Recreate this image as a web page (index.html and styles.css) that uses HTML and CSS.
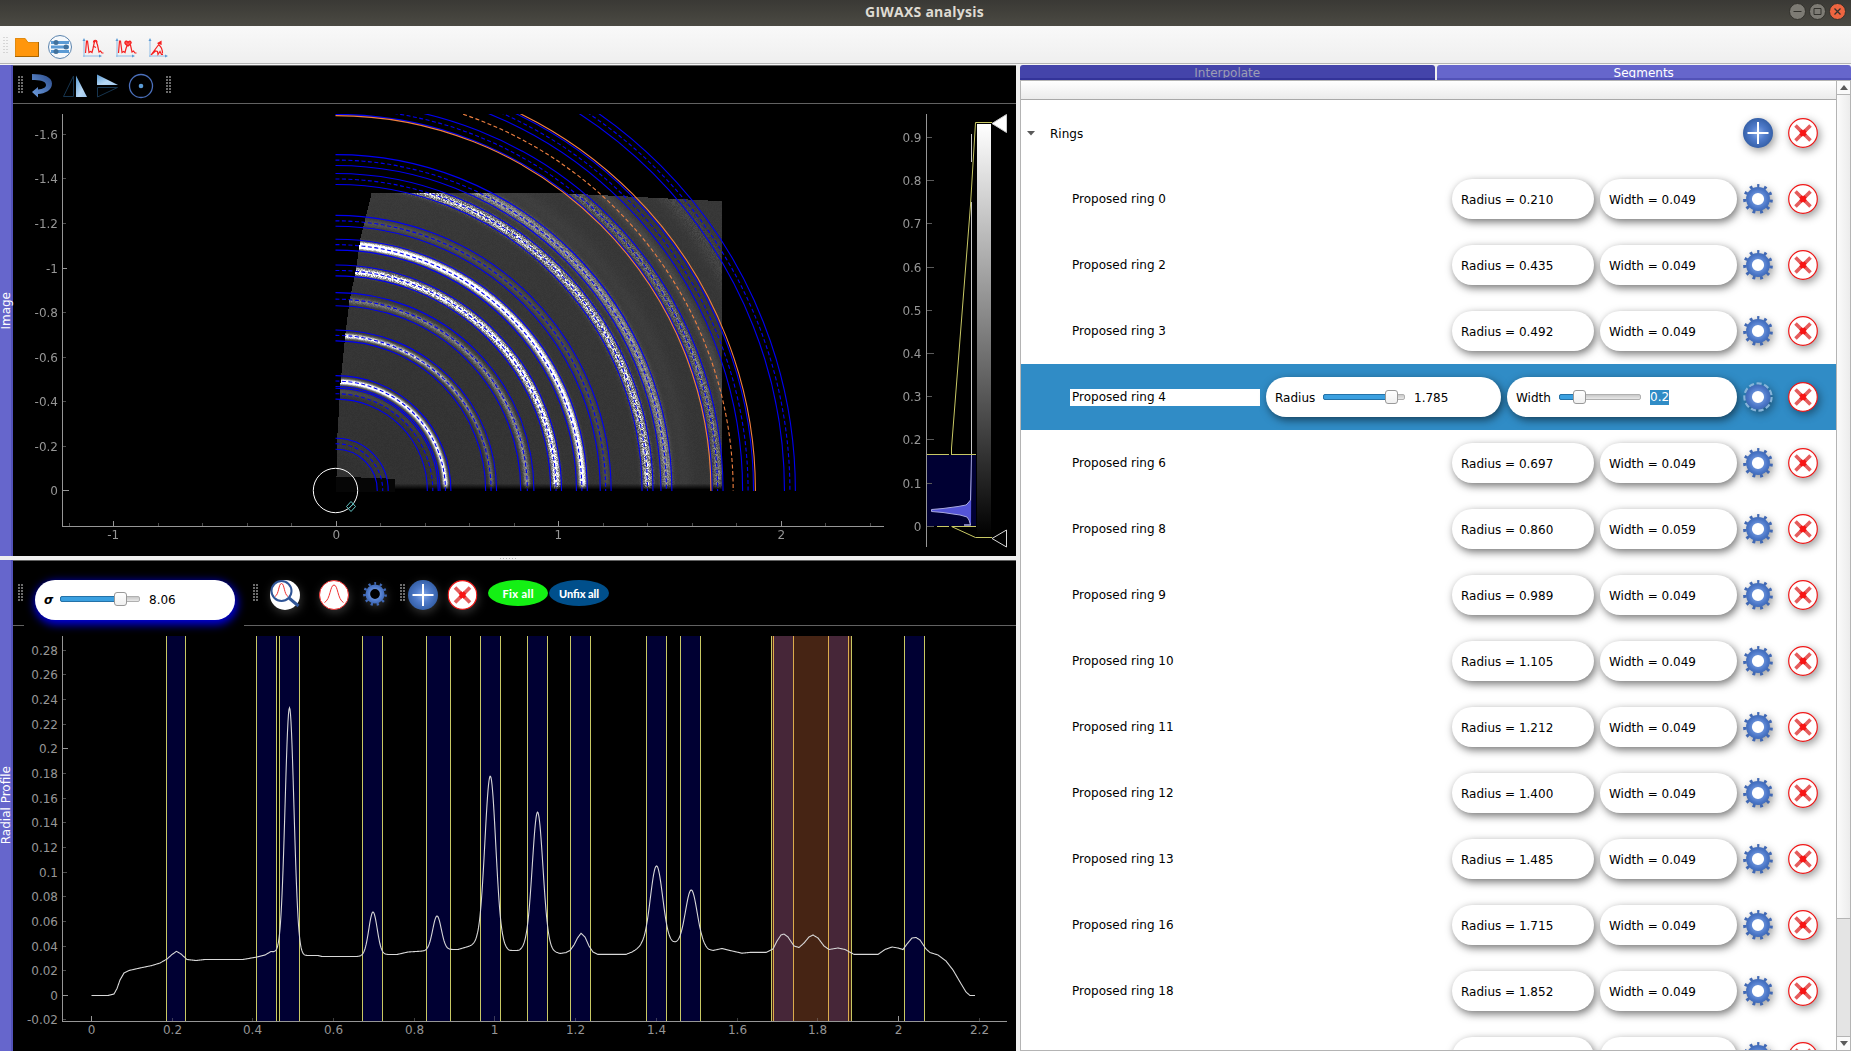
FILE: index.html
```html
<!DOCTYPE html>
<html lang="en">
<head>
<meta charset="utf-8">
<title>GIWAXS analysis</title>
<link rel="stylesheet" href="styles.css">
</head>
<body>
<svg class="defs" width="0" height="0" aria-hidden="true">
  <defs>
    <radialGradient id="blueBall"><stop offset="0" stop-color="#86aae8"/><stop offset=".5" stop-color="#4f7bca"/><stop offset="1" stop-color="#3560a8"/></radialGradient>
    <radialGradient id="gearFill" gradientUnits="userSpaceOnUse" cx="15" cy="15" r="15"><stop offset=".3" stop-color="#6f97de"/><stop offset=".65" stop-color="#4a75c6"/><stop offset="1" stop-color="#3560a8"/></radialGradient>
    <linearGradient id="arrowFill" x1="1" y1="0" x2="0" y2="1"><stop offset="0" stop-color="#2a4a8a"/><stop offset="1" stop-color="#6f9fe0"/></linearGradient>
    <linearGradient id="mirrorFill" x1="0" y1="0" x2="1" y2="1"><stop offset="0" stop-color="#5a9bd4"/><stop offset=".6" stop-color="#b8d8f4"/><stop offset="1" stop-color="#9cc4ea"/></linearGradient>
    <linearGradient id="barFill" x1="0" y1="0" x2="0" y2="1"><stop offset="0" stop-color="#fff"/><stop offset="1" stop-color="#000"/></linearGradient>
  </defs>
  <symbol id="add" viewBox="0 0 30 30"><circle cx="15" cy="15" r="15" fill="url(#blueBall)"/><path d="M15 4v22M4.500 15h21" stroke="#fff" stroke-width="2"/></symbol>
  <symbol id="del" viewBox="0 0 30 30"><circle cx="15" cy="15" r="14.300" fill="#fff" stroke="#f01818" stroke-width="1.200"/><path d="M7.500 7.500l15 15M22.500 7.500l-15 15" stroke="#e45c5c" stroke-width="3.600"/><path d="M12.500 12.500l5 5M17.500 12.500l-5 5" stroke="#f81414" stroke-width="3.600"/></symbol>
  <symbol id="gear" viewBox="0 0 30 30"><circle class="gear-hole" cx="15" cy="15" r="8"/><circle cx="15" cy="15" r="9" fill="none" stroke="url(#gearFill)" stroke-width="5.800"/><circle cx="15" cy="15" r="13.200" fill="none" stroke="#4068b4" stroke-width="3.400" stroke-dasharray="2.800 4.740" stroke-dashoffset="1.400" transform="rotate(-90 15 15)"/></symbol>
</svg>

<header class="titlebar">
  <span class="title">GIWAXS analysis</span>
  <div class="window-buttons">
    <svg width="17" height="17" viewBox="0 0 17 17"><circle cx="8.500" cy="8.500" r="8" fill="#7d7b74" stroke="#33322d"/><path d="M4.500 8.500h8" stroke="#33322d"/></svg>
    <svg width="17" height="17" viewBox="0 0 17 17"><circle cx="8.500" cy="8.500" r="8" fill="#7d7b74" stroke="#33322d"/><path d="M5 5.500h7v6H5z" fill="none" stroke="#33322d"/></svg>
    <svg width="17" height="17" viewBox="0 0 17 17"><circle cx="8.500" cy="8.500" r="8" fill="#ee6540" stroke="#33322d"/><path d="M5.500 5.500l6 6M11.500 5.500l-6 6" stroke="#33322d" stroke-width="1.300"/></svg>
  </div>
</header>

<nav class="main-toolbar">
  <svg width="180" height="37" viewBox="0 26 180 37">
    <path d="M4 37v17M7 37v17" stroke="#b8b8b8" stroke-dasharray="1 2"/>
    <path d="M15 38h10l3 4h11v15H15z" fill="#ff960c"/><path d="M15.500 57v-18.500h9.500l3 4h10" fill="none" stroke="#e08a10"/><path d="M38.500 42v14.500H15" fill="none" stroke="#a86400"/>
    <circle cx="60" cy="47" r="11.500" fill="#f6f9fc" stroke="#5b84ae"/>
    <path d="M51 42.500h18M51 47h18M51 51.500h18" stroke="#5b9bd5" stroke-width="3"/>
    <circle cx="56" cy="42.500" r="2.500" fill="#41719c"/><circle cx="66" cy="47" r="2.500" fill="#41719c"/><circle cx="56" cy="51.500" r="2.500" fill="#41719c"/>
    <g fill="none" stroke="#8fbce6">
      <path d="M84 57V40M83 56h17M117 57V40M116 56h17M150 57V40M149 56h17"/>
      <path d="M82.500 41l1.500-3 1.500 3zM115.500 41l1.500-3 1.500 3zM148.500 41l1.500-3 1.500 3zM99 54.500l3 1.500-3 1.500zM132 54.500l3 1.500-3 1.500zM165 54.500l3 1.500-3 1.500z" fill="#5b9bd5" stroke="none"/>
    </g>
    <g fill="none" stroke="#f52020" stroke-width="1.200">
      <path d="M85.500 53l1-12h1l1.500 11.500 1.500-1 1.500 1 1-4 1.500-7 1.500-.5 1.500 4 1.500 7 1.500-1 1.500 2h1.500"/><path d="M93.500 42.500c0-3 3.500-3 3.500 0M94 46.500l2 1"/>
      <path d="M118.500 53l1-12h1l1.500 11.500 1.500-1 1.500 1 1-4 1.500-4 1.500-.5 1.500 1 1.500 7 1.500-1 1.500 2h1.500"/><path d="M125 42c1-2 2.500-.5 3 .5.500-1 2-2 3-.5s-2 3-3 4c-1-1-4-2-3-4z" fill="#f55"/>
      <path d="M151 55l10-13.500M157.500 43.500l3.500-2v3.500M159 45c2.500 2 3.500 5 3.500 8.500M151.500 54.500l4-3.500 2 .5.500 3 2-3 1.500 3h1.500"/>
    </g>
  </svg>
</nav>

<main class="workspace">
  <section class="left">
    <div class="dock">
      <div class="side-tab"><span>Image</span></div>
      <div class="panel">
        <div class="tools tools-image">
          <svg width="170" height="37" viewBox="13 66 170 37">
            <path d="M19 76v17M22 76v17M167 76v17M170 76v17" stroke="#6c6c6c" stroke-width="2" stroke-dasharray="2 1"/>
            <path d="M32 74c12 0 20 3 20 9.500 0 7-7 10-14 10.500v3.500L32 92l6-5v2.500c5-.5 8-2 8-4.500 0-4-6-5-14-5z" fill="url(#arrowFill)"/>
            <path d="M73.500 76v20.500h-10z" fill="none" stroke="#16344e"/><path d="M76 75.500V97h11z" fill="url(#mirrorFill)"/>
            <path d="M97 74.500V85h21z" fill="url(#mirrorFill)"/><path d="M97.500 87.500h20l-20 9.500z" fill="none" stroke="#16344e"/>
            <circle cx="141" cy="86" r="11.500" fill="none" stroke="#4b70bc" stroke-width="1.300"/><circle cx="141" cy="86" r="2.300" fill="#5b9bd5"/>
          </svg>
        </div>
        <div class="plot">
          <canvas id="detector" class="detector" width="386" height="299"></canvas>
          <svg id="imagePlot" class="layer" width="1003" height="452" viewBox="13 104 1003 452"></svg>
        </div>
      </div>
    </div>
    <div class="split-h"></div>
    <div class="dock">
      <div class="side-tab"><span>Radial Profile</span></div>
      <div class="panel">
        <div class="tools tools-profile">
          <svg class="grip" width="6" height="17"><path d="M1 0v17M4 0v17" stroke="#6c6c6c" stroke-width="2" stroke-dasharray="2 1"/></svg>
          <div class="sigma-cell">
            <div class="pill sigma"><i>σ</i><div class="slider wide"><b style="width:59px"></b><s style="left:53px"></s></div><span>8.06</span></div>
          </div>
          <svg width="400" height="64" viewBox="244 561 400 64">
            <path d="M254 584v17M257 584v17M401 584v17M404 584v17" stroke="#6c6c6c" stroke-width="2" stroke-dasharray="2 1"/>
            <g class="glow">
            <circle cx="285" cy="595" r="15" fill="#fff"/><circle cx="281.500" cy="591" r="10" fill="#fff" stroke="#2f5597" stroke-width="2"/><path d="M289 598l9.500 8" stroke="#2f5597" stroke-width="3"/><path d="M275 596.500c4-2 3.500-13 6.500-13s2.500 11 6.500 13" fill="none" stroke="#f03030"/>
            <circle cx="334" cy="595" r="14.500" fill="#fff" stroke="#f03030"/><path d="M324.500 602.500c6-3 5.500-17.500 9.500-17.500s3.500 14.500 9.500 17.500" fill="none" stroke="#f03030"/>
            <use href="#gear" x="363" y="582" width="24" height="24"/>
            <use href="#add" x="408" y="580" width="30" height="30"/>
            <use href="#del" x="447.500" y="580" width="30" height="30"/>
            </g>
            <ellipse cx="518" cy="593" rx="30" ry="13" fill="#14f014"/><ellipse cx="579" cy="593" rx="30" ry="13" fill="#004f8b"/>
            <text class="fix" x="518" y="597.500" textLength="31">Fix all</text><text class="fix" x="579" y="597.500" textLength="40">Unfix all</text>
          </svg>
        </div>
        <div class="plot">
          <svg id="profilePlot" class="layer" width="1003" height="425" viewBox="13 626 1003 425"></svg>
        </div>
      </div>
    </div>
  </section>

  <div class="split-v"></div>

  <section class="right">
    <div class="tabs"><div class="tab off">Interpolate</div><div class="tab">Segments</div></div>
    <div class="tree">
      <div class="tree-body">
        <div class="tree-head"></div>
        <div class="row group"><svg class="caret" width="8" height="5"><path d="M0 0h8l-4 4.500z" fill="#5a5a5a"/></svg><span class="name">Rings</span><svg class="ic"><use href="#add"/></svg><svg class="ic"><use href="#del"/></svg></div>
        <div class="row"><span class="name">Proposed ring 0</span><div class="pill r">Radius = 0.210</div><div class="pill w">Width = 0.049</div><svg class="ic"><use href="#gear"/></svg><svg class="ic"><use href="#del"/></svg></div>
        <div class="row"><span class="name">Proposed ring 2</span><div class="pill r">Radius = 0.435</div><div class="pill w">Width = 0.049</div><svg class="ic"><use href="#gear"/></svg><svg class="ic"><use href="#del"/></svg></div>
        <div class="row"><span class="name">Proposed ring 3</span><div class="pill r">Radius = 0.492</div><div class="pill w">Width = 0.049</div><svg class="ic"><use href="#gear"/></svg><svg class="ic"><use href="#del"/></svg></div>
        <div class="row selected"><span class="name edit">Proposed ring 4</span>
          <div class="pill re"><label>Radius</label><div class="slider"><b style="width:67px"></b><s style="left:61px"></s></div><span>1.785</span></div>
          <div class="pill we"><label>Width</label><div class="slider"><b style="width:19px"></b><s style="left:13px"></s></div><span class="mark">0.2</span></div>
          <svg class="ic" viewBox="0 0 30 30"><circle cx="15" cy="15" r="13.500" fill="none" stroke="#86b4d8" stroke-width="2.400" stroke-dasharray="5.200 2.510"/><circle cx="15" cy="15" r="9.300" fill="#fff" stroke="url(#gearFill)" stroke-width="6.500"/></svg><svg class="ic"><use href="#del"/></svg></div>
        <div class="row"><span class="name">Proposed ring 6</span><div class="pill r">Radius = 0.697</div><div class="pill w">Width = 0.049</div><svg class="ic"><use href="#gear"/></svg><svg class="ic"><use href="#del"/></svg></div>
        <div class="row"><span class="name">Proposed ring 8</span><div class="pill r">Radius = 0.860</div><div class="pill w">Width = 0.059</div><svg class="ic"><use href="#gear"/></svg><svg class="ic"><use href="#del"/></svg></div>
        <div class="row"><span class="name">Proposed ring 9</span><div class="pill r">Radius = 0.989</div><div class="pill w">Width = 0.049</div><svg class="ic"><use href="#gear"/></svg><svg class="ic"><use href="#del"/></svg></div>
        <div class="row"><span class="name">Proposed ring 10</span><div class="pill r">Radius = 1.105</div><div class="pill w">Width = 0.049</div><svg class="ic"><use href="#gear"/></svg><svg class="ic"><use href="#del"/></svg></div>
        <div class="row"><span class="name">Proposed ring 11</span><div class="pill r">Radius = 1.212</div><div class="pill w">Width = 0.049</div><svg class="ic"><use href="#gear"/></svg><svg class="ic"><use href="#del"/></svg></div>
        <div class="row"><span class="name">Proposed ring 12</span><div class="pill r">Radius = 1.400</div><div class="pill w">Width = 0.049</div><svg class="ic"><use href="#gear"/></svg><svg class="ic"><use href="#del"/></svg></div>
        <div class="row"><span class="name">Proposed ring 13</span><div class="pill r">Radius = 1.485</div><div class="pill w">Width = 0.049</div><svg class="ic"><use href="#gear"/></svg><svg class="ic"><use href="#del"/></svg></div>
        <div class="row"><span class="name">Proposed ring 16</span><div class="pill r">Radius = 1.715</div><div class="pill w">Width = 0.049</div><svg class="ic"><use href="#gear"/></svg><svg class="ic"><use href="#del"/></svg></div>
        <div class="row"><span class="name">Proposed ring 18</span><div class="pill r">Radius = 1.852</div><div class="pill w">Width = 0.049</div><svg class="ic"><use href="#gear"/></svg><svg class="ic"><use href="#del"/></svg></div>
        <div class="row"><span class="name"></span><div class="pill r"></div><div class="pill w"></div><svg class="ic"><use href="#gear"/></svg><svg class="ic"><use href="#del"/></svg></div>
      </div>
      <div class="scroll">
        <div class="sbtn"><svg width="8" height="5"><path d="M0 5h8L4 0z" fill="#5a5a5a"/></svg></div>
        <div class="thumb"></div><div class="trough"></div>
        <div class="sbtn end"><svg width="8" height="5"><path d="M0 0h8L4 5z" fill="#5a5a5a"/></svg></div>
      </div>
    </div>
  </section>
</main>
<script src="plots.js"></script>
</body>
</html>
```
FILE: styles.css
```css
* { box-sizing: border-box; }
body { margin: 0; width: 1851px; height: 1051px; overflow: hidden; display: flex; flex-direction: column; background: #efefef; color: #000; font: 12px "DejaVu Sans", sans-serif; }
svg { display: block; flex: none; }
.defs { position: absolute; }

.titlebar { height: 26px; flex: none; display: grid; grid-template-columns: 1fr auto 1fr; align-items: center; background: linear-gradient(#3a3935, #4b4a43); color: #dfdbd2; }
.title { grid-column: 2; font: bold 14px "Open Sans", "Noto Sans", sans-serif; letter-spacing: .25px; padding: 0 2px 4px 0; }
.window-buttons { display: flex; gap: 3px; justify-self: end; padding: 0 5px 3px 0; }

.main-toolbar { height: 39px; flex: none; background: linear-gradient(#f9f9f9, #efefef 36px); border-bottom: 1px solid #f6f6f6; box-shadow: inset 0 -1px #b4b4b4; }

.workspace { flex: 1; min-height: 0; display: flex; }
.left { width: 1016px; flex: none; display: flex; flex-direction: column; }
.dock { display: flex; height: 491px; }
.split-h { height: 4px; background: repeating-linear-gradient(90deg, #b4b4b4 0 1px, transparent 1px 3px) center / 17px 1px no-repeat, #efefef; }
.split-v { width: 4px; background: #efefef; }
.side-tab { width: 13px; flex: none; background: #6666cc; border-right: 2px solid #5252b8; color: #fff; display: flex; align-items: center; justify-content: center; }
.side-tab span { writing-mode: vertical-rl; transform: translateX(1px) rotate(180deg); line-height: 13px; white-space: nowrap; }
.panel { flex: 1; min-width: 0; background: #000; border-top: 1px solid #626262; display: flex; flex-direction: column; }
.tools { display: flex; border-bottom: 1px solid #626262; flex: none; }
.tools-image { height: 38px; }
.tools-profile { height: 65px; }
.grip { margin: 23px 0 0 5px; }
.plot { position: relative; flex: 1; min-height: 0; }
.layer { position: absolute; inset: 0; }
.detector { position: absolute; left: 323px; top: 89px; }
.sigma-cell { width: 220px; height: 65px; padding: 19px 9px 0 11px; background: #000; }
.glow { filter: drop-shadow(1px 3px 5px rgba(255, 255, 255, .2)); }
.fix { font: 900 11px Lato, sans-serif; fill: #fff; text-anchor: middle; }
.axis { font: 12px "DejaVu Sans", sans-serif; fill: #969696; }
.gear-hole { fill: var(--gear-hole, #000); }

.pill { height: 40px; border-radius: 20px; background: #fff; display: flex; align-items: center; padding-left: 9px; padding-top: 1px; flex: none; white-space: nowrap; box-shadow: 2px 3px 8px rgba(0, 0, 0, .55); }
.sigma { width: 200px; padding-top: 0; box-shadow: 1px 3px 9px 2px #0000d8; }
.sigma i { width: 16px; font-weight: bold; }
.slider { position: relative; width: 82px; height: 6px; border: 1px solid #b0b0b0; border-radius: 2px; background: linear-gradient(#c8c8c8, #e8e8e8); flex: none; margin-top: -2px; }
.slider.wide { width: 80px; }
.slider b { display: block; height: 6px; margin: -1px; border: 1px solid #2472a8; border-radius: 2px; background: #3ba0e0; }
.slider s { position: absolute; top: -5px; width: 13px; height: 14px; border: 1px solid #999; border-radius: 3px; background: linear-gradient(#fff, #f0f0f0); }

.right { width: 831px; flex: none; display: flex; flex-direction: column; }
.tabs { display: flex; gap: 2px; height: 15px; flex: none; }
.tab { flex: 1; background: #6666cc; border-bottom: 2px solid #5252b8; color: #fff; text-align: center; line-height: 16px; border-radius: 3px 3px 0 0; overflow: hidden; }
.tab.off { background: #4444aa; border-color: #333399; color: #9c9cb4; }
.tree { --gear-hole: #fff; flex: 1; min-height: 0; display: flex; border: 1px solid #b4b4b4; background: #fff; }
.tree-body { flex: 1; min-width: 0; overflow: hidden; }
.tree-head { height: 19px; background: linear-gradient(#fff, #ebebeb); border-bottom: 1px solid #a8a8a8; }
.row { height: 66px; display: flex; align-items: center; padding: 0 18.5px 0 51px; }
.row .name { flex: 1; padding-bottom: 1px; }
.row.group { padding-left: 6px; }
.row.group .name { padding: 1px 0 0; }
.caret { margin-right: 15px; }
.pill.r { width: 142px; margin-right: 6px; }
.pill.w { width: 137px; }
.pill.re { width: 235px; margin: 0 6px; }
.pill.we { width: 230px; }
.pill label { width: 48px; }
.pill.we label { width: 43px; }
.pill .slider + span { margin-left: 9px; }
.row.selected { background: #308cc6; padding-left: 49px; }
.row .name.edit { background: #fff; padding: 1px 0 2px 2px; line-height: 14px; }
.mark { background: #308cc6; color: #fff; line-height: 15px; }
.ic { width: 30px; height: 30px; overflow: visible; margin-left: 6px; filter: drop-shadow(2px 3px 4px rgba(0, 0, 0, .4)); }
.ic + .ic { margin-left: 14.5px; }

.scroll { width: 14px; flex: none; border-left: 1px solid #b4b4b4; display: flex; flex-direction: column; }
.sbtn { height: 14px; display: flex; align-items: center; justify-content: center; background: #fafafa; border-bottom: 1px solid #b4b4b4; }
.sbtn.end { border-bottom: 0; border-top: 1px solid #b4b4b4; }
.thumb { height: 824px; background: linear-gradient(90deg, #fbfbfb, #ececec); border-bottom: 1px solid #b4b4b4; }
.trough { flex: 1; background: #e4e4e4; }
```
FILE: plots.js
```js
const NS = 'http://www.w3.org/2000/svg';
function add(parent, tag, attrs, text) {
  const el = document.createElementNS(NS, tag);
  for (const k in attrs) el.setAttribute(k, attrs[k]);
  if (text !== undefined) el.textContent = text;
  parent.appendChild(el);
  return el;
}
const line = (p, x1, y1, x2, y2, stroke) => add(p, 'path', { d: `M${x1} ${y1}L${x2} ${y2}`, stroke, fill: 'none' });
const snap = v => Math.floor(v) + 0.5;
const label = (p, x, y, t, anchor) => add(p, 'text', { x, y, class: 'axis', 'text-anchor': anchor }, t);

const rings = [[.21, .049], [.435, .049], [.492, .049], [.697, .049], [.86, .059], [.989, .049], [1.105, .049],
  [1.212, .049], [1.4, .049], [1.485, .049], [1.715, .049], [1.852, .049], [2.04, .049]];
const selected = [1.785, .2];

/* Detector picture: bright powder rings over a grey background */
(function () {
  const cv = document.getElementById('detector'), c = cv.getContext('2d');
  const W = cv.width, H = cv.height, img = c.createImageData(W, H);
  let seed = 7;
  const rnd = () => (seed = (seed * 1664525 + 1013904223) >>> 0) / 4294967296;
  const edge = [[193, 371], [238, 360], [272, 355], [300, 349], [333, 345], [383, 340], [433, 337], [476, 336], [495, 336]];
  /* radius, level at vertical, level at horizontal, sigma, speckle */
  const bands = [[.21, 6, 6, .02, 0], [.445, 26, 4, .010, .1], [.491, 300, 230, .0078, .15], [.697, 230, 55, .0075, .3],
    [.857, 60, 85, .010, .4], [.989, 240, 240, .0105, .7], [1.107, 370, 240, .0105, .3], [1.212, 26, 22, .012, .2],
    [1.4, 140, 135, .014, .9], [1.485, 90, 90, .016, .5], [1.56, 6, 6, .03, .1], [1.715, 20, 62, .014, .8],
    [1.79, 16, 18, .018, .2], [2.0, 20, 10, .03, .9]];
  for (let j = 0; j < H; j++) for (let i = 0; i < W; i++) {
    const x = 336 + i, y = 193 + j;
    let k = 0;
    while (k < edge.length - 2 && edge[k + 1][0] < y) k++;
    const e0 = edge[k], e1 = edge[k + 1];
    const left = e0[1] + (e1[1] - e0[1]) * (y - e0[0]) / (e1[0] - e0[0]);
    const top = x < 548 ? 193 : 193 + Math.floor((x - 548) / 20);
    if (x < left || y < top) continue;
    const dx = x - 336, dy = 490.5 - y, r = Math.hypot(dx, dy) / 222.5, t = Math.atan2(dx, dy) / (Math.PI / 2);
    let v = 49 + 9 * Math.min(1, r / 1.4) * (1 - t * .6) + (rnd() - .5) * 5;
    for (const b of bands) {
      const d = (r - b[0]) / b[3];
      if (Math.abs(d) < 3.2) v += (b[1] + (b[2] - b[1]) * Math.min(1, t * 1.3)) * Math.exp(-d * d / 2) * (1 + (rnd() - .5) * 1.6 * b[4]);
    }
    const bottom = x < 395 ? 476 + (x - 336) * .04 : 488;
    if (y > bottom - 5) v *= x < 395 ? (y > bottom ? .12 : 1) : Math.max(0, (bottom + 1 - y) / 6);
    const o = (j * W + i) * 4;
    img.data[o] = img.data[o + 1] = img.data[o + 2] = Math.max(0, Math.min(255, v));
    img.data[o + 3] = 255;
  }
  c.putImageData(img, 0, 0);
})();

/* Image plot */
(function () {
  const s = document.getElementById('imagePlot');
  const cx = 336, cy = 490.5, u = 222.5;
  const clip = add(add(s, 'defs', {}), 'clipPath', { id: 'view' });
  add(clip, 'rect', { x: 63, y: 114, width: 821, height: 412 });
  const g = add(s, 'g', { 'clip-path': 'url(#view)', fill: 'none' });
  const arc = (r, stroke, dash) => add(g, 'path', { d: `M${cx - .5} ${cy - r * u}A${r * u} ${r * u} 0 0 1 ${cx + r * u} ${cy + .5}`, stroke, 'stroke-width': 1.1, 'stroke-dasharray': dash || 'none' });
  for (const [r, w] of rings) {
    arc(r - w / 2, '#0000f4'); arc(r + w / 2, '#0000f4'); arc(r, '#0000f4', '4 2.5');
  }
  const [r, w] = selected;
  arc(r - w / 2, '#f08040'); arc(r + w / 2, '#f08040'); arc(r, '#f08040', '4 2.5');
  add(s, 'circle', { cx: 335.5, cy: 490.5, r: 22.2, fill: 'none', stroke: '#fff' });
  add(s, 'path', { d: 'M346.500 506.500l4.500-5 4.500 5-4.500 5zM348 509l6-6', fill: 'none', stroke: '#62c4c4' });
  line(s, 62.5, 114, 62.5, 527, '#969696');
  line(s, 62, 526.5, 884, 526.5, '#969696');
  for (let i = 0; i <= 8; i++) {
    const y = snap(cy - i * .2 * u);
    line(s, 63, y, i === 0 ? 69 : i === 5 ? 67 : 66, y, i % 5 ? '#4c4c4c' : '#969696');
    label(s, 58, y + 4.5, i ? '-' + +(i * .2).toFixed(1) : '0', 'end');
  }
  for (let i = -6; i <= 12; i++) {
    const x = snap(cx + .3 + i * .2 * u);
    line(s, x, 526, x, i % 5 ? 523 : 521, i % 5 ? '#4c4c4c' : '#969696');
    if (i % 5 === 0) label(s, x - .3, 539, String(i / 5), 'middle');
  }
  /* level histogram */
  line(s, 926.5, 114, 926.5, 547, '#969696');
  add(s, 'rect', { x: 927, y: 455, width: 49, height: 71, fill: '#000033' });
  for (let i = 0; i <= 9; i++) {
    const y = snap(526.3 - i * 43.2);
    line(s, 927, y, i % 2 ? 932 : 934, y, '#5a5a5a');
    label(s, 921.5, y + 4.5, i ? '0.' + i : '0', 'end');
  }
  line(s, 971.5, 134, 971.5, 162, '#c8c8c8');
  line(s, 971.5, 202, 971.5, 455, '#c8c8c8');
  add(s, 'path', { d: 'M971.500 455L970.500 500L968 503L966 505L958 506.500L943 508.500L931.500 509.500V511.500L943 512.500L953 514L960 515L967 517L969 520L970.500 525H964H971', fill: '#5454d8', stroke: '#a8a8e0' });
  add(s, 'path', { d: 'M927 454.500H949M951 454.500H976M951.500 454V448L970.500 205L975.500 122.500H992M937 526.500H949M952 526.500H976M951.500 526.500L975.500 537.500H992', fill: 'none', stroke: '#c8c864' });
  add(s, 'rect', { x: 977, y: 124, width: 14, height: 413, fill: 'url(#barFill)' });
  add(s, 'path', { d: 'M992 123.500L1006.500 114.500V132.500Z', fill: '#fff', stroke: '#ccc' });
  add(s, 'path', { d: 'M992 538.500L1006.500 530V547Z', fill: '#000', stroke: '#d8d8d8' });
})();

/* Radial profile plot */
(function () {
  const s = document.getElementById('profilePlot');
  const x0 = 91.4, u = 403.55, y0 = 995.5, v = 1232.8;
  for (const [r, w] of rings) {
    const a = x0 + (r - w / 2) * u, b = x0 + (r + w / 2) * u;
    add(s, 'rect', { x: Math.round(a), y: 636, width: Math.round(b) - Math.round(a), height: 385, fill: '#000033' });
  }
  add(s, 'rect', { x: 771, y: 636, width: 81, height: 385, fill: '#462414' });
  add(s, 'rect', { x: 774, y: 636, width: 20, height: 385, fill: '#462638' });
  add(s, 'rect', { x: 829, y: 636, width: 20, height: 385, fill: '#462638' });
  for (const [r, w] of rings.concat([selected])) for (const d of [-w / 2, w / 2]) {
    const x = snap(x0 - .2 + (r + d) * u);
    line(s, x, 636, x, 1021, x > 772 && x < 851 ? '#dcac4c' : '#c8c864');
  }
  const base = [[91.3, 995.5], [108, 995.5], [114, 994], [117, 988.5], [120, 980], [124, 973], [129, 970.5], [140, 968], [152, 965.5],
    [160, 963], [167, 959], [172, 954.5], [176.5, 951.3], [181, 954], [187, 959.5], [196, 960.5], [205, 959.5], [243, 959.5], [257, 957],
    [265, 955], [271, 951.5], [277, 952.5], [284, 953], [298, 955], [305, 955.5], [318, 955.5], [322, 956.5], [357, 956.5], [373, 955],
    [386, 954.5], [397, 954.5], [408, 952], [424, 951], [437, 950], [448, 949.5], [458, 949.5], [470, 946], [477, 943], [490, 944], [503, 947],
    [509, 950.5], [519, 950.5], [526, 947], [537, 946], [549, 949], [554, 951.6], [560, 953.5], [566, 952.6], [570, 950.5], [574, 945], [577.5, 938],
    [581, 933.3], [585, 937], [589, 946], [593, 952], [598, 954.4], [626, 954.4], [632, 952], [638, 948.5], [642, 946.5], [656, 946],
    [674, 943.5], [691, 945], [702, 946], [708, 949.5], [713, 950.5], [722, 948.5], [730, 950.5], [742, 953.2], [750, 952.4], [766, 952.4],
    [773, 949], [777, 941], [781, 935], [784, 934], [788, 937], [794, 946], [799, 947.5], [804, 943], [809, 937], [813, 935], [818, 938],
    [824, 946], [829, 949.5], [838, 948], [845, 949.5], [854, 954.4], [878, 954.4], [885, 949.5], [892, 947], [898, 948], [903, 949.5],
    [907, 944], [912, 938], [916, 937.5], [920, 940], [926, 949], [930, 952.5], [938, 955], [946, 961], [953, 970], [960, 982], [966, 992],
    [970, 995.5], [975, 995.5]];
  const peaks = [[289.5, 246, 4.4], [373, 43, 4.2], [437, 34, 4.3], [490.3, 168, 5.4], [537.6, 134, 5.3], [656.5, 80, 6.1], [691.3, 55, 5.8]];
  let d = '';
  for (let i = 0, x = 91.5; x <= 975; x += .5) {
    while (base[i + 1][0] < x) i++;
    const a = base[i], b = base[i + 1], t = Math.max(0, (x - a[0]) / (b[0] - a[0]));
    let y = a[1] + (b[1] - a[1]) * t;
    for (const p of peaks) y -= p[1] * Math.exp(-((x - p[0]) ** 2) / (2 * p[2] * p[2]));
    d += (d ? 'L' : 'M') + x + ' ' + y.toFixed(2);
  }
  add(s, 'path', { d, fill: 'none', stroke: '#d8d8d8', 'stroke-width': 1.1 });
  line(s, 62.5, 636, 62.5, 1022, '#969696');
  line(s, 62, 1021.5, 1007, 1021.5, '#969696');
  for (let i = -1; i <= 14; i++) {
    const y = snap(y0 - i * .02 * v - (i < 0 ? 1 : 0));
    line(s, 63, y, i % 10 === 0 ? 68 : i % 5 === 0 ? 67 : 66, y, i % 10 ? '#4c4c4c' : '#969696');
    label(s, 58, y + 4.5, String(+(i * .02).toFixed(2)), 'end');
  }
  for (let i = 0; i <= 11; i++) {
    const x = snap(x0 + i * .2 * u);
    line(s, x, 1021, x, i % 5 ? 1018 : 1016, i % 10 ? 'rgba(150,150,150,.4)' : '#969696');
    label(s, x, 1034, String(+(i * .2).toFixed(1)), 'middle');
  }
})();
```
